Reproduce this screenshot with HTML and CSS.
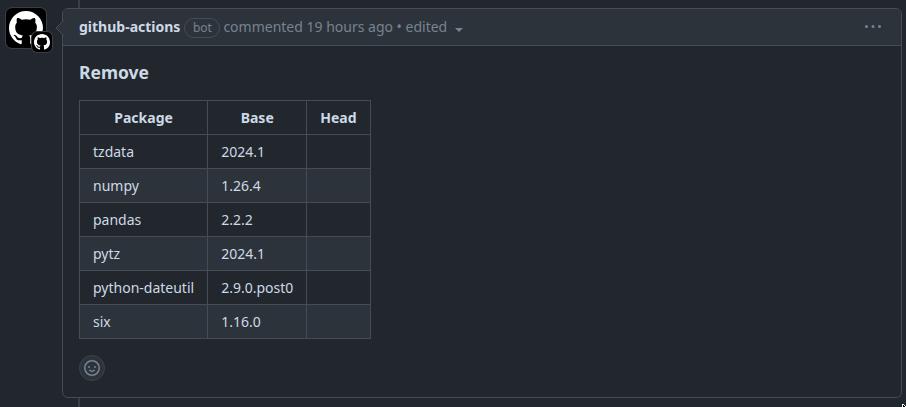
FILE: index.html
```html
<!DOCTYPE html>
<html lang="en">
<head>
<meta charset="utf-8">
<title>Comment</title>
<link rel="stylesheet" href="styles.css">
</head>
<body>
<svg class="defs" width="0" height="0"><symbol id="mark" viewBox="0 0 16 16"><path d="M8 0C3.58 0 0 3.58 0 8c0 3.54 2.29 6.53 5.47 7.59.4.07.55-.17.55-.38 0-.19-.01-.82-.01-1.49-2.01.37-2.53-.49-2.69-.94-.09-.23-.48-.94-.82-1.13-.28-.15-.68-.52-.01-.53.63-.01 1.08.58 1.23.82.72 1.21 1.87.87 2.33.66.07-.52.28-.87.51-1.07-1.78-.2-3.64-.89-3.64-3.95 0-.87.31-1.59.82-2.15-.08-.2-.36-1.02.08-2.12 0 0 .67-.21 2.2.82.64-.18 1.32-.27 2-.27s1.36.09 2 .27c1.53-1.04 2.2-.82 2.2-.82.44 1.1.16 1.92.08 2.12.51.56.82 1.27.82 2.15 0 3.07-1.87 3.75-3.65 3.95.29.25.54.73.54 1.48 0 1.07-.01 1.93-.01 2.2 0 .21.15.46.55.38A8.01 8.01 0 0 0 16 8c0-4.42-3.58-8-8-8Z"/></symbol></svg>
<main class="timeline">
  <div class="avatar">
    <svg class="avatar-mark" width="34" height="34"><use href="#mark"/></svg>
    <span class="avatar-badge"><svg width="16" height="16"><use href="#mark"/></svg></span>
  </div>
  <article class="comment">
    <svg class="caret" width="9" height="16" viewBox="0 0 9 16"><path class="caret-fill" d="M9 0 1 8l8 8Z"/><path class="caret-line" d="M8.5 .5 1 8l7.5 7.5"/></svg>
    <header class="comment-header">
      <strong class="author">github-actions</strong>
      <span class="label">bot</span>
      <span class="meta">commented 19 hours ago • edited</span>
      <span class="dropdown"></span>
      <svg class="kebab" width="16" height="16" viewBox="0 0 16 16"><path d="M8 9a1.5 1.5 0 1 0 0-3 1.5 1.5 0 0 0 0 3ZM1.5 9a1.5 1.5 0 1 0 0-3 1.5 1.5 0 0 0 0 3Zm13 0a1.5 1.5 0 1 0 0-3 1.5 1.5 0 0 0 0 3Z"/></svg>
    </header>
    <div class="comment-body">
      <h3>Remove</h3>
      <table>
        <thead><tr><th>Package</th><th>Base</th><th>Head</th></tr></thead>
        <tbody>
          <tr><td>tzdata</td><td>2024.1</td><td></td></tr>
          <tr><td>numpy</td><td>1.26.4</td><td></td></tr>
          <tr><td>pandas</td><td>2.2.2</td><td></td></tr>
          <tr><td>pytz</td><td>2024.1</td><td></td></tr>
          <tr><td>python-dateutil</td><td>2.9.0.post0</td><td></td></tr>
          <tr><td>six</td><td>1.16.0</td><td></td></tr>
        </tbody>
      </table>
      <button class="react" aria-label="Add reaction"><svg width="16" height="16" viewBox="0 0 16 16"><path d="M8 0a8 8 0 1 1 0 16A8 8 0 0 1 8 0ZM1.5 8a6.5 6.5 0 1 0 13 0 6.5 6.5 0 0 0-13 0Zm3.82 1.636a.75.75 0 0 1 1.038.175l.007.009c.103.118.22.222.35.31.264.178.683.37 1.285.37.602 0 1.02-.192 1.285-.371.13-.088.247-.192.35-.31l.007-.008a.75.75 0 0 1 1.222.87l-.022-.015c.02.013.021.015.021.015v.001a3.13 3.13 0 0 1-.739.682C9.66 11.71 8.96 12 8 12s-1.66-.29-2.125-.636a3.13 3.13 0 0 1-.739-.682.75.75 0 0 1 .184-1.046ZM12 7a1 1 0 1 1-2 0 1 1 0 0 1 2 0ZM5 8a1 1 0 1 1 0-2 1 1 0 0 1 0 2Z"/></svg></button>
    </div>
  </article>
  <svg class="pointer" width="4" height="3" viewBox="0 0 4 3"><path d="M0 0h2v1h1v1h1v1H0Z" fill="#fff"/><path d="M1 1h1v1h1v1H1Z" fill="#000"/></svg>
</main>
</body>
</html>
```
FILE: styles.css
```css
* { box-sizing: border-box; }
body {
  margin: 0;
  height: 407px;
  overflow: hidden;
  background: #22272e;
  color: #cdd9e5;
  font: 14px/21px "Noto Sans", sans-serif;
}
.defs { position: absolute; }
.timeline {
  position: relative;
  display: flex;
  gap: 16px;
  height: 407px;
  padding: 8px 4px 9px 6px;
}
.timeline::before {
  content: "";
  position: absolute;
  left: 78px;
  top: 0;
  bottom: 0;
  width: 2px;
  background: #373e47;
}
.avatar {
  position: relative;
  width: 40px;
  height: 40px;
  flex: none;
  display: flex;
  align-items: center;
  justify-content: center;
  border-radius: 6px;
  background: #000;
  box-shadow: 0 0 0 1px #373e47;
  fill: #fff;
}
.avatar-badge {
  position: absolute;
  left: 26px;
  top: 24px;
  width: 20px;
  height: 20px;
  display: flex;
  align-items: center;
  justify-content: center;
  border-radius: 5px;
  background: #000;
  box-shadow: 0 0 0 1px #373e47;
}
.comment {
  position: relative;
  flex: 1;
  border: 1px solid #444c56;
  border-radius: 6px;
  background: #22272e;
}
.caret { position: absolute; left: -8px; top: 11px; }
.caret-fill { fill: #2d333b; }
.caret-line { fill: none; stroke: #444c56; }
.comment-header {
  display: flex;
  align-items: center;
  height: 37px;
  padding: 0 20px 1px 16px;
  border-bottom: 1px solid #444c56;
  border-radius: 5px 5px 0 0;
  background: #2d333b;
  color: #768390;
}
.author { color: #cdd9e5; font-weight: 700; }
.label {
  height: 20px;
  margin: 3px 3px 0 4px;
  padding: 0 7.5px;
  border: 1px solid #444c56;
  border-radius: 10px;
  font-size: 12px;
  line-height: 18px;
}
.dropdown {
  margin: 7px 0 0 8px;
  border: 4px solid transparent;
  border-top-color: #768390;
  border-bottom: 0;
}
.kebab { margin: 1px 0 0 auto; fill: #768390; }
.comment-body { padding: 15px 16px 16px; }
h3 { margin: 0 0 17px; font-size: 17.5px; line-height: 22px; font-weight: 700; }
table { border-collapse: collapse; }
th, td { height: 34px; padding: 6px 13px; border: 1px solid #444c56; }
th { font-weight: 700; }
tbody tr:nth-child(even) { background: #2d333b; }
.react {
  display: flex;
  align-items: center;
  justify-content: center;
  width: 26px;
  height: 26px;
  margin-top: 16px;
  padding: 0;
  border: 1px solid #3d444d;
  border-radius: 50%;
  background: #2d333b;
  fill: #768390;
}
.pointer { position: absolute; right: 0; bottom: 0; }
```
